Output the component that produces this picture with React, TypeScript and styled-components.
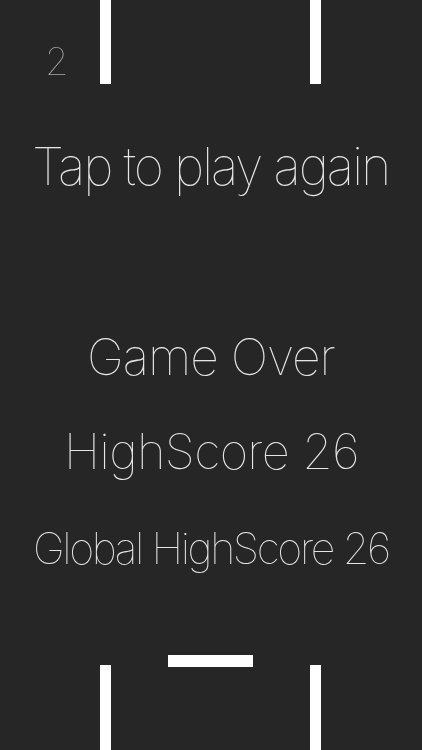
import styled, { createGlobalStyle } from 'styled-components';

const GlobalStyle = createGlobalStyle`
  html, body {
    margin: 0;
    padding: 0;
    background: #262626;
  }
  body {
    font-family: "Inter", "Liberation Sans", sans-serif;
    -webkit-font-smoothing: antialiased;
  }
`;

const Screen = styled.div`
  width: 422px;
  height: 750px;
  overflow: hidden;
  background: #262626;
  display: flex;
  flex-direction: column;
`;

const TopRow = styled.div`
  height: 84px;
  display: flex;
  align-items: stretch;
`;

const Score = styled.div`
  width: 55px;
  padding-left: 45px;
  padding-top: 42px;
  font-size: 38px;
  font-weight: 100;
  color: #a8a8a8;
  line-height: 1;
  will-change: transform;
`;

const Pipe = styled.div<{ $gap?: number }>`
  width: 11px;
  margin-left: ${(p) => p.$gap ?? 0}px;
  background: #fff;
`;

const Messages = styled.div`
  flex: 1;
  display: flex;
  flex-direction: column;
  align-items: center;
`;

const Line = styled.div<{ $size: number; $top: number; $track: number }>`
  margin-top: ${(p) => p.$top}px;
  font-size: ${(p) => p.$size}px;
  letter-spacing: ${(p) => p.$track}px;
  font-weight: 100;
  line-height: 1;
  color: #e6e6e6;
  white-space: nowrap;
  will-change: transform;
`;

const BottomRow = styled.div`
  height: 95px;
  display: flex;
  align-items: flex-end;
  padding-left: 100px;
`;

const BottomPipe = styled(Pipe)`
  height: 85px;
`;

const Paddle = styled.div`
  align-self: flex-start;
  width: 85px;
  height: 12px;
  margin: 0 57px;
  background: #fff;
`;

export default function App() {
  return (
    <>
      <GlobalStyle />
      <Screen>
        <TopRow>
          <Score>2</Score>
          <Pipe />
          <Pipe $gap={199} />
        </TopRow>
        <Messages>
          <Line $size={52} $top={57} $track={-2.2}>Tap to play again</Line>
          <Line $size={50} $top={139} $track={-1.1}>Game Over</Line>
          <Line $size={49} $top={45} $track={-0.7}>HighScore 26</Line>
          <Line $size={43} $top={51} $track={-2.4}>Global HighScore 26</Line>
        </Messages>
        <BottomRow>
          <BottomPipe />
          <Paddle />
          <BottomPipe />
        </BottomRow>
      </Screen>
    </>
  );
}
